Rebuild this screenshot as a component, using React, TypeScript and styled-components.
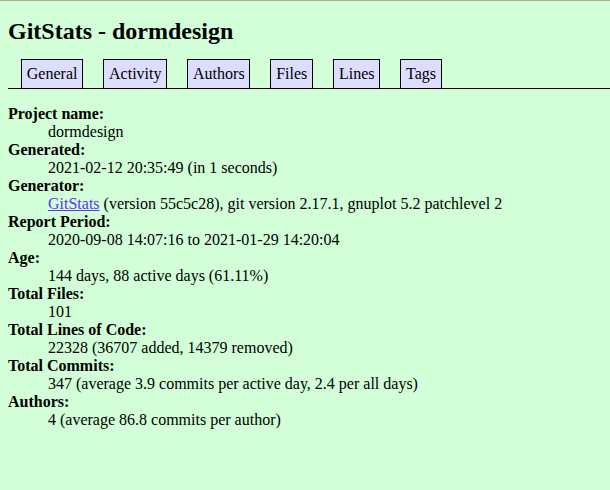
import React from "react";
import styled, { createGlobalStyle } from "styled-components";

const GlobalStyle = createGlobalStyle`
  html, body {
    margin: 0;
    padding: 0;
    background: #d2ffd8;
  }
  body {
    font-family: "Liberation Serif", "Times New Roman", serif;
    font-size: 16px;
    color: black;
  }
`;

const Page = styled.div`
  min-height: 489px;
  border-top: 1px solid #a8a8a8;
  padding: 0 0 0 8px;
  background: #d2ffd8;
`;

const Title = styled.h1`
  font-size: 24px;
  font-weight: bold;
  margin: 0;
  padding-top: 17px;
  line-height: 27px;
`;

const Nav = styled.div`
  height: 29px;
  margin-top: 14px;
  border-bottom: 1px solid black;
  display: flex;
  align-items: flex-end;
  padding-left: 13px;
  gap: 20px;
`;

const Tab = styled.a`
  display: block;
  box-sizing: border-box;
  height: 30px;
  margin-bottom: -1px;
  padding: 4px 4.8px 0;
  line-height: 20px;
  border: 1px solid black;
  background: #ddddff;
  color: black;
  text-decoration: none;
`;

const List = styled.dl`
  margin: 16px 0 0;
  line-height: 18px;
`;

const Term = styled.dt`
  font-weight: bold;
  &:after {
    content: ":";
  }
`;

const Desc = styled.dd`
  margin-left: 40px;
`;

const Link = styled.a`
  color: #6236f0;
  text-decoration: underline;
`;

const tabs = ["General", "Activity", "Authors", "Files", "Lines", "Tags"];

const rows: [string, React.ReactNode][] = [
  ["Project name", "dormdesign"],
  ["Generated", "2021-02-12 20:35:49 (in 1 seconds)"],
  [
    "Generator",
    <>
      <Link href="#">GitStats</Link> (version 55c5c28), git version 2.17.1,
      gnuplot 5.2 patchlevel 2
    </>,
  ],
  ["Report Period", "2020-09-08 14:07:16 to 2021-01-29 14:20:04"],
  ["Age", "144 days, 88 active days (61.11%)"],
  ["Total Files", "101"],
  ["Total Lines of Code", "22328 (36707 added, 14379 removed)"],
  ["Total Commits", "347 (average 3.9 commits per active day, 2.4 per all days)"],
  ["Authors", "4 (average 86.8 commits per author)"],
];

export default function App() {
  return (
    <Page>
      <GlobalStyle />
      <Title>GitStats - dormdesign</Title>
      <Nav>
        {tabs.map((t) => (
          <Tab key={t} href="#">
            {t}
          </Tab>
        ))}
      </Nav>
      <List>
        {rows.map(([k, v]) => (
          <React.Fragment key={k}>
            <Term>{k}</Term>
            <Desc>{v}</Desc>
          </React.Fragment>
        ))}
      </List>
    </Page>
  );
}
